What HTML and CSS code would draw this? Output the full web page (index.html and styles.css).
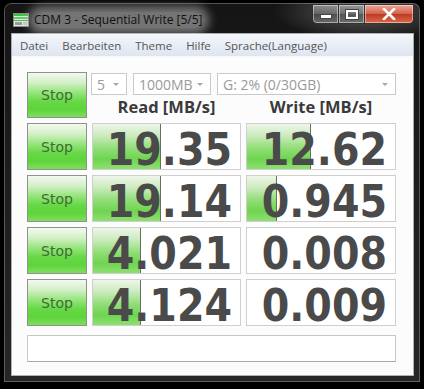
FILE: index.html
```html
<!DOCTYPE html>
<html>
<head>
<meta charset="utf-8">
<link rel="stylesheet" href="styles.css">
</head>
<body>
<div class="window">
  <div class="titlebar">
    <svg class="app-icon" width="16" height="16" viewBox="0 0 16 16">
      <rect x="0.5" y="1.5" width="15" height="13" fill="#e8e8e8" stroke="#8a8a8a"/>
      <rect x="1" y="2" width="14" height="2" fill="#3fbf3f"/>
      <rect x="1" y="5" width="14" height="2" fill="#55d455"/>
      <rect x="1" y="8" width="14" height="1" fill="#3fbf3f"/>
      <rect x="2" y="10" width="7" height="3" fill="#9a9a9a"/>
      <rect x="10" y="10" width="4" height="3" fill="#c8c8c8"/>
    </svg>
    <span class="title">CDM 3 - Sequential Write [5/5]</span>
    <div class="caption">
      <div class="cbtn min"><span class="min-glyph"></span></div>
      <div class="cbtn max"><span class="max-glyph"></span></div>
      <div class="cbtn close">
        <svg width="14" height="12" viewBox="0 0 14 12"><path d="M2 1 L12 11 M12 1 L2 11" stroke="#fff" stroke-width="2.6" stroke-linecap="square" fill="none"/></svg>
      </div>
    </div>
  </div>
  <div class="client">
    <div class="menubar">
      <span class="menu-item">Datei</span>
      <span class="menu-item">Bearbeiten</span>
      <span class="menu-item">Theme</span>
      <span class="menu-item">Hilfe</span>
      <span class="menu-item">Sprache(Language)</span>
    </div>
    <div class="content">
      <div class="grid">
        <div class="stop">Stop</div>
        <div class="head">
          <div class="combos">
            <div class="combo c1"><span>5</span><i class="arrow"></i></div>
            <div class="combo c2"><span>1000MB</span><i class="arrow"></i></div>
            <div class="combo c3"><span>G: 2% (0/30GB)</span><i class="arrow"></i></div>
          </div>
          <div class="label">Read [MB/s]</div>
          <div class="label">Write [MB/s]</div>
        </div>

        <div class="stop">Stop</div>
        <div class="cell"><div class="bar" style="width:67px"></div><span class="num">19.35</span></div>
        <div class="cell"><div class="bar" style="width:63px"></div><span class="num">12.62</span></div>

        <div class="stop">Stop</div>
        <div class="cell"><div class="bar" style="width:67px"></div><span class="num">19.14</span></div>
        <div class="cell"><div class="bar" style="width:29px"></div><span class="num">0.945</span></div>

        <div class="stop">Stop</div>
        <div class="cell"><div class="bar" style="width:47px"></div><span class="num">4.021</span></div>
        <div class="cell"><span class="num">0.008</span></div>

        <div class="stop">Stop</div>
        <div class="cell"><div class="bar" style="width:47px"></div><span class="num">4.124</span></div>
        <div class="cell"><span class="num">0.009</span></div>
      </div>
      <div class="comment"></div>
    </div>
  </div>
</div>
</body>
</html>
```

FILE: styles.css
```css
html, body {
  margin: 0;
  padding: 0;
  background: #000;
  width: 424px;
  height: 389px;
  overflow: hidden;
}

.window {
  margin: 3px 4px 0 4px;
  width: 416px;
  height: 379px;
  box-sizing: border-box;
  border-radius: 7px 7px 0 0;
  background:
    radial-gradient(ellipse 90px 30px at 360px 8px, rgba(150,150,150,0.55), rgba(80,80,80,0) 100%),
    linear-gradient(to bottom, #151515 0%, #1c1c1c 40%, #262626 100%);
  box-shadow: inset 0 0 0 1px rgba(200,200,200,0.35);
  padding: 0 7px 7px 8px;
  display: flex;
  flex-direction: column;
}

.titlebar {
  height: 31px;
  display: flex;
  align-items: flex-start;
}

.app-icon {
  margin: 9px 0 0 1px;
  flex: none;
}

.title {
  margin: 9px 0 0 5px;
  font-family: "Open Sans", "Noto Sans", sans-serif;
  font-size: 12px;
  line-height: 16px;
  color: #111;
  background: rgba(180,180,180,0.6);
  border-radius: 10px;
  box-shadow: 0 0 10px 6px rgba(180,180,180,0.6);
  white-space: nowrap;
}

.caption {
  margin-left: auto;
  margin-top: 1px;
  margin-right: -1px;
  display: flex;
}

.cbtn {
  height: 20px;
  box-sizing: border-box;
  border: 1px solid rgba(40,40,40,0.9);
  box-shadow: inset 0 0 0 1px rgba(255,255,255,0.45);
  display: flex;
  align-items: center;
  justify-content: center;
  background: linear-gradient(to bottom, rgba(210,210,210,0.55) 0%, rgba(150,150,150,0.45) 50%, rgba(90,90,90,0.5) 51%, rgba(140,140,140,0.6) 100%);
}

.min {
  width: 27px;
  border-radius: 0 0 0 5px;
}

.max {
  width: 26px;
  border-left: none;
}

.close {
  width: 49px;
  border-left: none;
  border-radius: 0 0 5px 0;
  background: linear-gradient(to bottom, #e9a697 0%, #d4604c 50%, #c03a22 51%, #d9694c 100%);
}

.min-glyph {
  width: 10px;
  height: 3px;
  margin-top: 5px;
  background: #fff;
  border: 1px solid #444;
}

.max-glyph {
  width: 8px;
  height: 5px;
  border: 2px solid #fff;
  outline: 1px solid #444;
}

.client {
  flex: 1;
  background: #fcfcfc;
  display: flex;
  flex-direction: column;
  box-shadow: 0 0 0 1px rgba(235,235,235,0.7);
}

.menubar {
  height: 22px;
  border-bottom: 1px solid #f6f8fb;
  background: linear-gradient(to bottom, #f4f7fb 0%, #e6ecf5 60%, #dfe6f1 100%);
  display: flex;
  align-items: center;
  padding-left: 1px;
  font-family: "Open Sans", "Noto Sans", sans-serif;
  font-size: 11.5px;
  color: #555;
}

.menu-item {
  padding: 0 7px;
}

.content {
  padding: 15px 17px 0 15px;
}

.grid {
  display: grid;
  grid-template-columns: 60px 149px 150px;
  grid-template-rows: 46px repeat(4, 47px);
  column-gap: 5px;
  row-gap: 5px;
}

.stop {
  box-sizing: border-box;
  border: 1px solid #8e948c;
  background: linear-gradient(to bottom, #f3f9f0 0%, #d4f0c8 22%, #94e47a 45%, #66d846 65%, #5ed43c 82%, #7fdd60 100%);
  display: flex;
  align-items: center;
  justify-content: center;
  font-family: "DejaVu Sans", sans-serif;
  font-size: 14px;
  color: #3f6b34;
}

.head {
  grid-column: 2 / 4;
  display: grid;
  grid-template-columns: 149px 150px;
  column-gap: 5px;
  grid-template-rows: 22px auto;
  padding-top: 1px;
}

.combos {
  grid-column: 1 / 3;
  display: flex;
  gap: 6px;
  margin-left: -1px;
}

.combo {
  box-sizing: border-box;
  height: 22px;
  border: 1px solid #cacaca;
  background: #fff;
  display: flex;
  align-items: center;
  padding-left: 5px;
  font-family: "Open Sans", "Noto Sans", sans-serif;
  font-size: 14px;
  color: #9a9a9a;
  position: relative;
}

.c1 { width: 36px; }
.c2 { width: 78px; }
.c3 { width: 179px; }

.arrow {
  position: absolute;
  right: 7px;
  top: 9px;
  width: 0;
  height: 0;
  border-left: 3px solid transparent;
  border-right: 3px solid transparent;
  border-top: 3px solid #a8a8a8;
}

.label {
  text-align: center;
  font-family: "Open Sans", "Noto Sans", sans-serif;
  font-weight: 700;
  font-size: 16.5px;
  line-height: 22px;
  padding-top: 1px;
  color: #3a3a3a;
}

.cell {
  box-sizing: border-box;
  border: 1px solid #cfcfcf;
  background: #fff;
  position: relative;
  display: flex;
  justify-content: flex-end;
  align-items: flex-end;
}

.bar {
  position: absolute;
  left: 0;
  top: 0;
  bottom: 0;
  border-right: 1px solid #66725f;
  background: linear-gradient(to bottom, #eef6ea 0%, #cdebc0 25%, #8fdd74 55%, #6ed550 78%, #8ee070 100%);
}

.num {
  position: relative;
  font-family: "DejaVu Sans Condensed", "DejaVu Sans", sans-serif;
  font-stretch: condensed;
  font-weight: 700;
  font-size: 44px;
  line-height: 33px;
  padding-bottom: 3px;
  padding-right: 8px;
  color: #4a4a4a;
  white-space: nowrap;
}

.comment {
  margin-top: 9px;
  height: 27px;
  box-sizing: border-box;
  border: 1px solid #c8c8c8;
  border-bottom-color: #a9a9a9;
  background: #fff;
}
```
